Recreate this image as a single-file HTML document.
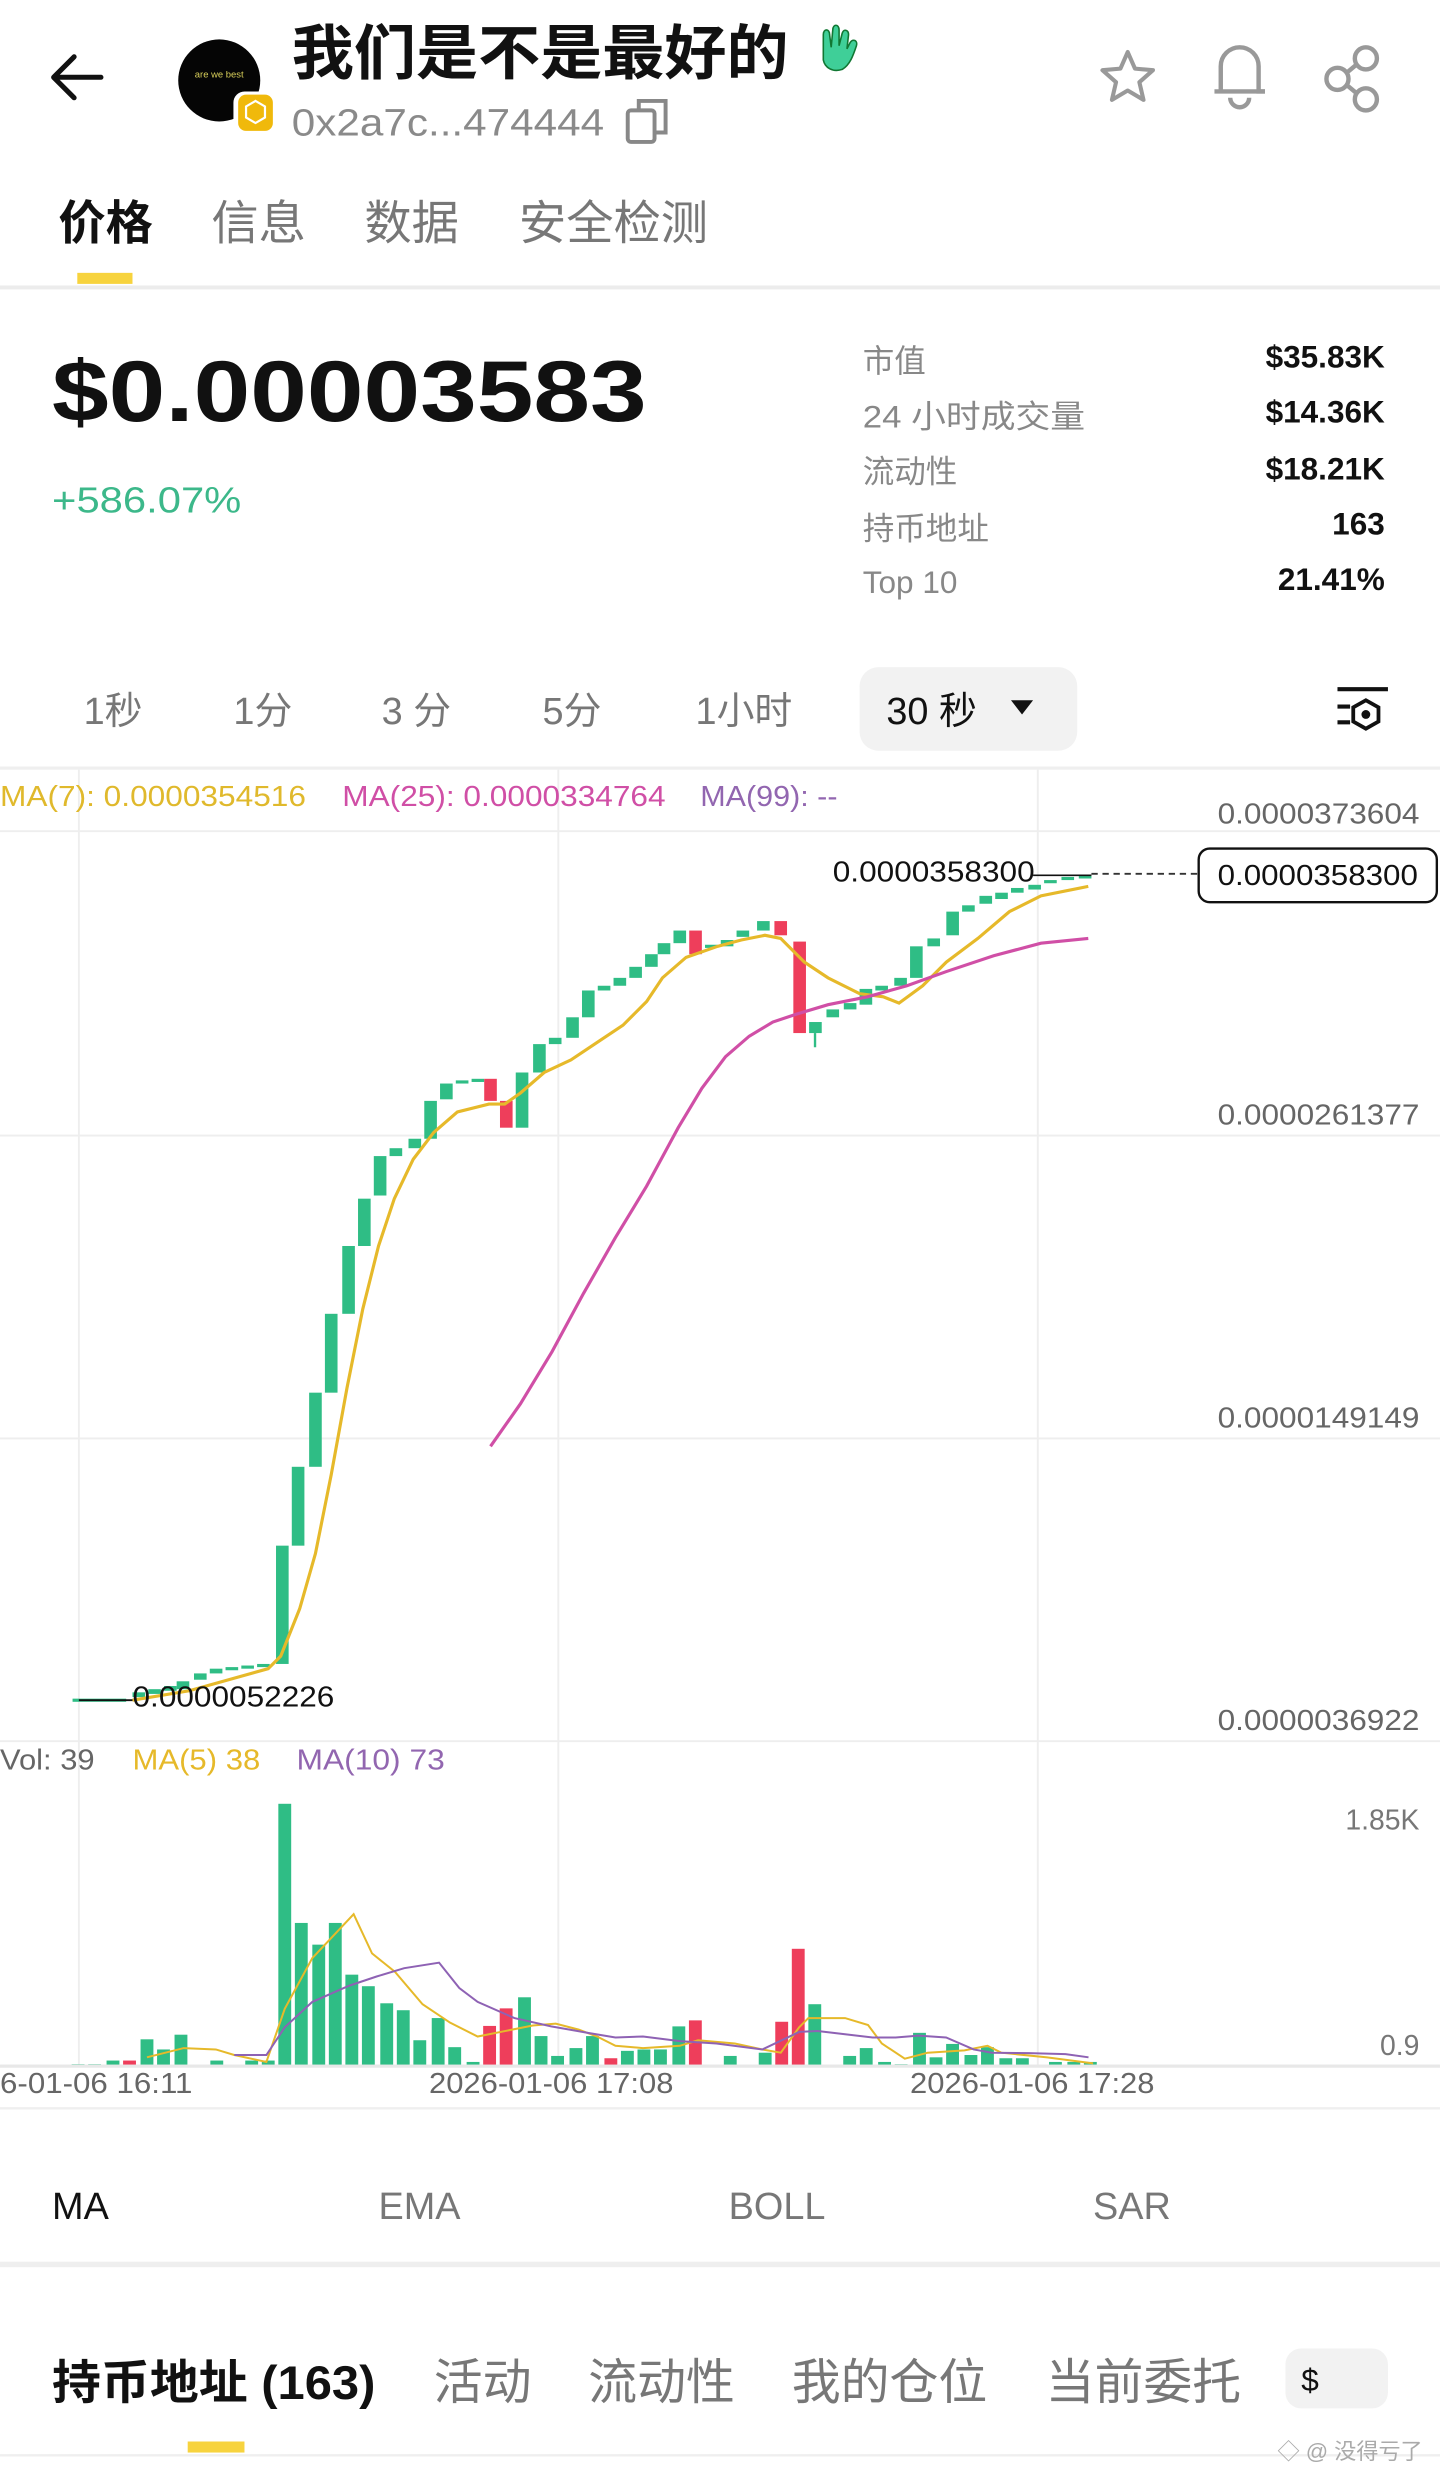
<!DOCTYPE html>
<html><head><meta charset="utf-8"><style>
html,body{margin:0;padding:0;background:#fff;}
svg{display:block;}
text{font-family:"Liberation Sans","Noto Sans CJK SC",sans-serif;}
</style></head><body>
<svg width="1440" height="2474" viewBox="0 0 913 1568.6" xmlns="http://www.w3.org/2000/svg">
<rect width="913" height="1568.6" fill="#fff"/>
<!-- header -->
<path d="M64 49H34M34 49L47 36M34 49L47 62" stroke="#111" stroke-width="3.2" fill="none" stroke-linecap="round" stroke-linejoin="round"/>
<circle cx="139" cy="51" r="26" fill="#050505"/>
<text x="139" y="49" font-size="6" fill="#d8cf5a" text-anchor="middle">are we best</text>
<rect x="148" y="58" width="27" height="27" rx="7" fill="#fff"/>
<rect x="151" y="60" width="22" height="23" rx="5" fill="#f0b90b"/>
<path d="M162 64l6 3.5v7l-6 3.5-6-3.5v-7z" stroke="#fff" stroke-width="1.4" fill="none"/>
<text x="185" y="47" font-size="38" font-weight="bold" fill="#111" textLength="315" lengthAdjust="spacingAndGlyphs">我们是不是最好的</text>
<path d="M522 22c0-4 4-4 4 0l1 8 1-11c0-4 4-4 4 0v10l2-8c1-3 4-2 4 1l-1 9 2-4c2-3 5-1 4 2-2 6-4 12-9 15-6 2-11-1-12-6z" fill="#3fcf98" stroke="#173" stroke-width="1"/>
<text x="185" y="86" font-size="24" fill="#8a8a8a" textLength="198" lengthAdjust="spacingAndGlyphs">0x2a7c...474444</text>
<rect x="398" y="70" width="17" height="20" rx="2" stroke="#888" stroke-width="2.5" fill="none"/>
<path d="M405 70v-6h17v20h-7" stroke="#888" stroke-width="2.5" fill="none"/>
<path d="M715 33l4.6 10.5 11.4 1-8.6 7.6 2.6 11.2L715 57.4 705 63.3l2.6-11.2-8.6-7.6 11.4-1z" stroke="#999" stroke-width="2.6" fill="none" stroke-linejoin="round"/>
<path d="M774 58v-16a12 12 0 0 1 24 0v16h4" stroke="#999" stroke-width="2.8" fill="none"/>
<path d="M770 58h32M780 62a6 6 0 0 0 12 0" stroke="#999" stroke-width="2.8" fill="none"/>
<circle cx="848" cy="50" r="7" stroke="#999" stroke-width="2.8" fill="none"/>
<circle cx="866" cy="37" r="7" stroke="#999" stroke-width="2.8" fill="none"/>
<circle cx="866" cy="63" r="7" stroke="#999" stroke-width="2.8" fill="none"/>
<path d="M854 46l6-5M854 54l6 5" stroke="#999" stroke-width="2.8"/>
<!-- tabs -->
<text x="37" y="152" font-size="30" font-weight="bold" fill="#111">价格</text>
<text x="134" y="152" font-size="30" fill="#777">信息</text>
<text x="231" y="152" font-size="30" fill="#777">数据</text>
<text x="329" y="152" font-size="30" fill="#777">安全检测</text>
<rect x="49" y="173" width="35" height="7" fill="#f7d33e"/>
<rect x="0" y="181" width="913" height="2.5" fill="#ececec"/>
<!-- price -->
<text x="33" y="267" font-size="55" font-weight="bold" fill="#111" textLength="377" lengthAdjust="spacingAndGlyphs">$0.00003583</text>
<text x="33" y="325" font-size="23" fill="#3cb88a" textLength="120" lengthAdjust="spacingAndGlyphs">+586.07%</text>
<g font-size="20" fill="#888">
<text x="547" y="236">市值</text>
<text x="547" y="271" textLength="141" lengthAdjust="spacingAndGlyphs">24 小时成交量</text>
<text x="547" y="306">流动性</text>
<text x="547" y="342">持币地址</text>
<text x="547" y="376">Top 10</text>
</g>
<g font-size="20" fill="#111" font-weight="bold" text-anchor="end">
<text x="878" y="233">$35.83K</text>
<text x="878" y="268">$14.36K</text>
<text x="878" y="304">$18.21K</text>
<text x="878" y="339">163</text>
<text x="878" y="374">21.41%</text>
</g>
<!-- timeframe -->
<g font-size="24" fill="#777">
<text x="53" y="459">1秒</text>
<text x="148" y="459">1分</text>
<text x="242" y="459">3 分</text>
<text x="344" y="459">5分</text>
<text x="441" y="459">1小时</text>
</g>
<rect x="545" y="423" width="138" height="53" rx="12" fill="#f2f2f2"/>
<text x="562" y="459" font-size="24" fill="#111">30 秒</text>
<path d="M641 444h14l-7 9z" fill="#111"/>
<path d="M848 437h32M848 448h8M848 458h8" stroke="#111" stroke-width="2.6"/>
<path d="M866 444l8 4.5v9l-8 4.5-8-4.5v-9z" stroke="#111" stroke-width="2.4" fill="none"/>
<circle cx="866" cy="453" r="2.8" fill="#111"/>
<rect x="0" y="486" width="913" height="2" fill="#efefef"/>
<!-- chart grid -->
<g stroke="#eeeeee" stroke-width="1.2">
<path d="M0 527H913M0 720H913M0 912H913M0 1104H913"/>
<path d="M50 488V1310M354 488V1310M658 488V1310"/>
</g>
<text x="0" y="511" font-size="18" fill="#e0b92c" textLength="194" lengthAdjust="spacingAndGlyphs">MA(7): 0.0000354516</text>
<text x="217" y="511" font-size="18" fill="#d04fa6" textLength="205" lengthAdjust="spacingAndGlyphs">MA(25): 0.0000334764</text>
<text x="444" y="511" font-size="18" fill="#9266b0" textLength="87" lengthAdjust="spacingAndGlyphs">MA(99): --</text>
<g font-size="18" fill="#666">
<text x="772" y="522" textLength="128" lengthAdjust="spacingAndGlyphs">0.0000373604</text>
<text x="772" y="713" textLength="128" lengthAdjust="spacingAndGlyphs">0.0000261377</text>
<text x="772" y="905" textLength="128" lengthAdjust="spacingAndGlyphs">0.0000149149</text>
<text x="772" y="1097" textLength="128" lengthAdjust="spacingAndGlyphs">0.0000036922</text>
</g>
<!-- candles -->
<g fill="#2fbd85">
<rect x="46" y="1077" width="34" height="2"/>
<rect x="84" y="1073" width="8" height="3"/><rect x="94" y="1071" width="8" height="3"/><rect x="104" y="1069" width="8" height="3"/>
<rect x="112" y="1066" width="8" height="5"/><rect x="123" y="1061" width="8" height="4"/><rect x="133" y="1058" width="8" height="3"/><rect x="143" y="1057" width="8" height="2"/><rect x="153" y="1056" width="8" height="2"/><rect x="163" y="1055" width="8" height="2"/>
<rect x="175" y="980" width="8" height="75"/>
<rect x="185" y="930" width="8" height="50"/>
<rect x="196" y="883" width="8" height="47"/>
<rect x="206" y="833" width="8" height="50"/>
<rect x="217" y="790" width="8" height="43"/>
<rect x="227" y="760" width="8" height="30"/>
<rect x="237" y="733" width="8" height="25"/>
<rect x="247" y="728" width="8" height="5"/>
<rect x="259" y="722" width="8" height="6"/>
<rect x="269" y="698" width="8" height="24"/>
<rect x="279" y="687" width="8" height="10"/>
<rect x="289" y="685" width="8" height="2"/>
<rect x="299" y="684" width="8" height="2"/>
<rect x="327" y="680" width="8" height="35"/>
<rect x="338" y="662" width="8" height="18"/>
<rect x="348" y="658" width="8" height="4"/>
<rect x="359" y="645" width="8" height="13"/>
<rect x="369" y="628" width="8" height="17"/>
<rect x="379" y="625" width="8" height="3"/>
<rect x="389" y="620" width="8" height="5"/>
<rect x="399" y="613" width="8" height="7"/>
<rect x="409" y="605" width="8" height="8"/>
<rect x="417" y="598" width="8" height="7"/>
<rect x="427" y="590" width="8" height="8"/>
<rect x="447" y="599" width="8" height="2"/>
<rect x="457" y="596" width="8" height="4"/>
<rect x="467" y="590" width="8" height="4"/>
<rect x="480" y="584" width="8" height="6"/>
<rect x="513" y="648" width="8" height="7"/><rect x="516" y="655" width="1.5" height="9"/>
<rect x="524" y="640" width="8" height="5"/>
<rect x="535" y="636" width="8" height="4"/>
<rect x="545" y="627" width="8" height="10"/>
<rect x="555" y="625" width="8" height="3"/>
<rect x="567" y="620" width="8" height="5"/>
<rect x="577" y="600" width="8" height="20"/>
<rect x="588" y="595" width="8" height="5"/>
<rect x="600" y="578" width="8" height="15"/>
<rect x="610" y="574" width="8" height="4"/>
<rect x="621" y="568" width="8" height="5"/>
<rect x="631" y="566" width="8" height="4"/>
<rect x="641" y="563" width="8" height="3"/>
<rect x="652" y="561" width="8" height="3"/>
<rect x="662" y="558" width="8" height="2"/>
<rect x="673" y="556" width="8" height="2"/>
<rect x="684" y="555" width="8" height="2"/>
</g>
<g fill="#ee3e5b">
<rect x="307" y="684" width="8" height="14"/>
<rect x="317" y="698" width="8" height="17"/>
<rect x="437" y="590" width="8" height="15"/>
<rect x="491" y="584" width="8" height="9"/>
<rect x="503" y="597" width="8" height="58"/>
</g>
<polyline fill="none" stroke="#e6b92a" stroke-width="2" points="84,1078 120,1072 170,1058 178,1050 190,1020 200,985 210,935 220,880 230,830 240,790 250,760 262,735 275,718 290,705 310,700 320,700 330,693 345,680 362,672 380,660 395,650 410,635 420,620 435,607 455,600 470,596 485,593 495,595 510,610 525,620 545,630 560,632 570,636 585,625 600,610 620,595 640,578 660,568 690,562"/>
<polyline fill="none" stroke="#d04fa6" stroke-width="2" points="311,917 330,890 350,857 370,820 390,785 410,752 430,715 445,690 460,670 475,657 490,648 505,643 525,637 550,632 575,625 600,616 630,606 660,598 690,595"/>
<text x="528" y="559" font-size="18" fill="#111" textLength="128" lengthAdjust="spacingAndGlyphs">0.0000358300</text>
<path d="M655 555H692" stroke="#111" stroke-width="1"/>
<path d="M692 554H760" stroke="#333" stroke-width="1.2" stroke-dasharray="4 3"/>
<rect x="760" y="538" width="151" height="34" rx="7" fill="#fff" stroke="#111" stroke-width="1.5"/>
<text x="772" y="561" font-size="18" fill="#111" textLength="127" lengthAdjust="spacingAndGlyphs">0.0000358300</text>
<path d="M50 1078H84" stroke="#111" stroke-width="1.2"/>
<text x="84" y="1082" font-size="18" fill="#111" textLength="128" lengthAdjust="spacingAndGlyphs">0.0000052226</text>
<!-- volume -->
<text x="0" y="1122" font-size="18" fill="#666" textLength="60" lengthAdjust="spacingAndGlyphs">Vol: 39</text>
<text x="84" y="1122" font-size="18" fill="#e6b92a" textLength="81" lengthAdjust="spacingAndGlyphs">MA(5) 38</text>
<text x="188" y="1122" font-size="18" fill="#9266b0" textLength="94" lengthAdjust="spacingAndGlyphs">MA(10) 73</text>
<text x="900" y="1160" font-size="18" fill="#777" text-anchor="end">1.85K</text>
<text x="900" y="1303" font-size="18" fill="#777" text-anchor="end">0.9</text>
<g transform="translate(0,1109.7) scale(0.5824,0.2928)">
<g fill="#2fbd85">
<rect x="78" y="680" width="14" height="6"/><rect x="96" y="680" width="14" height="6"/><rect x="116" y="672" width="14" height="14"/>
<rect x="153" y="626" width="14" height="60"/><rect x="171" y="648" width="14" height="38"/><rect x="190" y="616" width="14" height="70"/>
<rect x="229" y="672" width="14" height="14"/><rect x="267" y="672" width="14" height="14"/><rect x="285" y="672" width="14" height="14"/>
<rect x="303" y="116" width="14" height="570"/><rect x="321" y="374" width="14" height="312"/><rect x="340" y="421" width="14" height="265"/><rect x="358" y="374" width="14" height="312"/><rect x="376" y="486" width="14" height="200"/><rect x="394" y="511" width="14" height="175"/><rect x="414" y="548" width="14" height="138"/><rect x="432" y="563" width="14" height="123"/><rect x="450" y="628" width="14" height="58"/><rect x="470" y="580" width="14" height="106"/><rect x="488" y="643" width="14" height="43"/><rect x="508" y="675" width="14" height="11"/>
<rect x="564" y="535" width="14" height="151"/><rect x="582" y="619" width="14" height="67"/><rect x="600" y="662" width="14" height="24"/><rect x="620" y="645" width="14" height="41"/><rect x="638" y="619" width="14" height="67"/>
<rect x="676" y="651" width="14" height="35"/><rect x="694" y="648" width="14" height="38"/><rect x="712" y="648" width="14" height="38"/><rect x="732" y="598" width="14" height="88"/>
<rect x="788" y="662" width="14" height="24"/><rect x="826" y="655" width="14" height="31"/><rect x="880" y="550" width="14" height="136"/>
<rect x="918" y="662" width="14" height="24"/><rect x="936" y="645" width="14" height="41"/><rect x="956" y="675" width="14" height="11"/><rect x="974" y="680" width="14" height="6"/><rect x="994" y="612" width="14" height="74"/><rect x="1012" y="665" width="14" height="21"/><rect x="1030" y="636" width="14" height="50"/><rect x="1050" y="660" width="14" height="26"/><rect x="1068" y="643" width="14" height="43"/><rect x="1088" y="667" width="14" height="19"/><rect x="1106" y="667" width="14" height="19"/><rect x="1142" y="675" width="14" height="11"/><rect x="1162" y="675" width="14" height="11"/><rect x="1180" y="675" width="14" height="11"/>
</g>
<g fill="#ee3e5b">
<rect x="134" y="672" width="14" height="14"/><rect x="526" y="597" width="14" height="89"/><rect x="544" y="559" width="14" height="127"/><rect x="658" y="667" width="14" height="19"/><rect x="750" y="585" width="14" height="101"/><rect x="844" y="588" width="14" height="98"/><rect x="862" y="430" width="14" height="256"/>
</g>
<g vector-effect="non-scaling-stroke">
<polyline fill="none" stroke="#e6b92a" stroke-width="2" vector-effect="non-scaling-stroke" points="160,665 200,645 235,648 255,660 290,675 310,560 340,450 385,355 405,440 430,480 460,550 490,590 520,620 545,610 580,596 605,592 630,605 650,620 670,640 700,645 740,640 760,628 800,635 830,648 850,655 870,600 880,580 920,580 945,595 960,635 985,668 1010,655 1050,650 1075,640 1090,655 1140,665 1190,678"/>
<polyline fill="none" stroke="#8e62b4" stroke-width="2" vector-effect="non-scaling-stroke" points="255,660 290,660 310,600 340,545 380,510 410,490 440,472 478,460 500,515 520,545 560,580 600,598 640,612 670,622 700,620 740,630 780,635 830,648 870,610 890,608 920,615 950,622 975,622 1000,618 1030,622 1060,648 1080,655 1120,656 1160,658 1185,665"/>
</g>
</g>
<rect x="0" y="1309" width="913" height="2" fill="#e8e8e8"/>
<g font-size="18" fill="#666">
<text x="0" y="1327" textLength="122" lengthAdjust="spacingAndGlyphs">6-01-06 16:11</text>
<text x="272" y="1327" textLength="155" lengthAdjust="spacingAndGlyphs">2026-01-06 17:08</text>
<text x="577" y="1327" textLength="155" lengthAdjust="spacingAndGlyphs">2026-01-06 17:28</text>
</g>
<rect x="0" y="1336" width="913" height="1.5" fill="#efefef"/>
<!-- indicators -->
<text x="33" y="1407" font-size="24" fill="#111">MA</text>
<text x="240" y="1407" font-size="24" fill="#777">EMA</text>
<text x="462" y="1407" font-size="24" fill="#777">BOLL</text>
<text x="693" y="1407" font-size="24" fill="#777">SAR</text>
<rect x="0" y="1434" width="913" height="3.5" fill="#efefef"/>
<!-- bottom tabs -->
<text x="33" y="1521" font-size="30" font-weight="bold" fill="#111" textLength="205" lengthAdjust="spacingAndGlyphs">持币地址 (163)</text>
<text x="275" y="1521" font-size="31" fill="#777">活动</text>
<text x="373" y="1521" font-size="31" fill="#777">流动性</text>
<text x="502" y="1521" font-size="31" fill="#777">我的仓位</text>
<text x="663" y="1521" font-size="31" fill="#777">当前委托</text>
<rect x="815" y="1489" width="65" height="38" rx="10" fill="#f2f2f2"/>
<text x="825" y="1516" font-size="20" fill="#111">$</text>
<rect x="119" y="1548" width="36" height="7" fill="#f7d33e"/>
<rect x="0" y="1556" width="913" height="1.5" fill="#efefef"/>
<text x="810" y="1559" font-size="14" fill="#aaa">◇ @ 没得亏了</text>
</svg>
</body></html>
